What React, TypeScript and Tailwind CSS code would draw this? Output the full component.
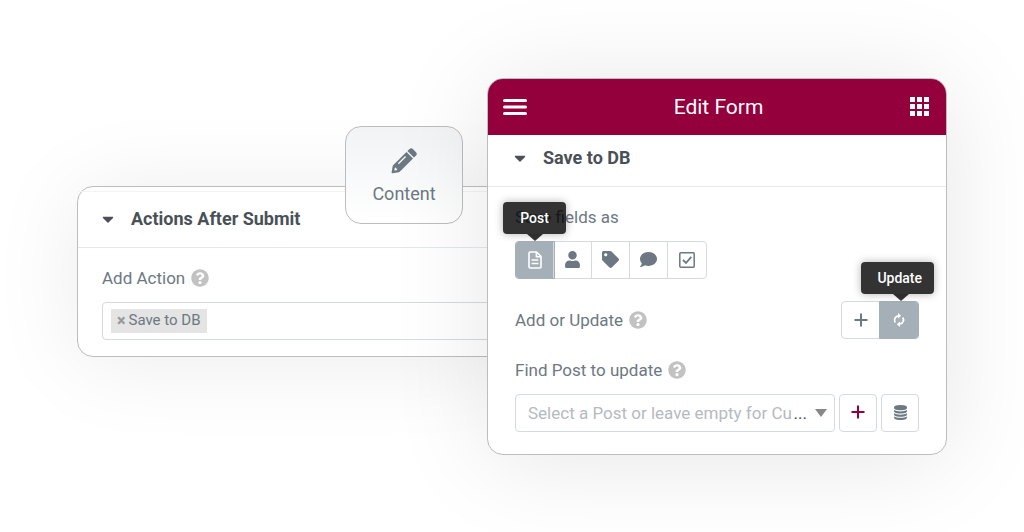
import { useState } from "react";
import type { ReactNode } from "react";
import { FaCaretDown, FaComment, FaQuestionCircle, FaTag, FaUser } from "react-icons/fa";

function PencilIcon() {
  return (
    <svg viewBox="0 0 26 26" className="size-[27px]" fill="currentColor" aria-hidden="true">
      <path d="M17.6 2.1a2.6 2.6 0 0 1 3.7 0l2.6 2.6a2.6 2.6 0 0 1 0 3.7l-1.8 1.8-6.3-6.3z" />
      <path
        fillRule="evenodd"
        d="M14.9 4.8l6.3 6.3L8.4 23.9a1.5 1.5 0 0 1-.8.4L1.4 25.2a.7.7 0 0 1-.8-.8l1-6.1a1.5 1.5 0 0 1 .4-.8zM13.6 8.7l-7 7 .9.9 7-7zM3.6 20.2l-.4 2.5 2.5-.3.3-1.5-1.1-.1-.1-1.1z"
      />
    </svg>
  );
}

function DocumentIcon() {
  return (
    <svg viewBox="0 0 14 18" className="h-[18px] w-[14px]" fill="none" stroke="currentColor" strokeWidth="1.6" aria-hidden="true">
      <path d="M2.2 1H8.6L13 5.4V15.8a1.2 1.2 0 0 1-1.2 1.2H2.2A1.2 1.2 0 0 1 1 15.8V2.2A1.2 1.2 0 0 1 2.2 1zM8.4 1.2V5.7H12.8" />
      <path d="M3.6 9H10.4M3.6 12.5H10.4" />
    </svg>
  );
}

function CheckBoxIcon() {
  return (
    <svg viewBox="0 0 16 16" className="size-4" fill="none" stroke="currentColor" aria-hidden="true">
      <rect x="0.8" y="0.8" width="14.4" height="14.4" rx="1" strokeWidth="1.5" />
      <path d="M4 8L7 11L12.3 4.8" strokeWidth="1.8" />
    </svg>
  );
}

function SyncIcon() {
  return (
    <svg viewBox="0 0 14 14" className="size-[14px]" fill="none" stroke="currentColor" strokeWidth="1.8" aria-hidden="true">
      <path d="M7.4 2.8H6.6A4.3 4.3 0 0 0 3.2 9.4M6.6 11.2H7.4A4.3 4.3 0 0 0 10.8 4.6" />
      <path d="M6 0V5.6L9.2 2.8zM8 14V8.4L4.8 11.2z" fill="currentColor" stroke="none" />
    </svg>
  );
}

function PlusIcon() {
  return (
    <svg viewBox="0 0 14 14" className="size-[14px]" stroke="currentColor" strokeWidth="2" aria-hidden="true">
      <path d="M7 0.5V13.5M0.5 7H13.5" />
    </svg>
  );
}

function DatabaseIcon() {
  return (
    <svg viewBox="0 0 1536 1792" className="h-[15px] w-[13px]" fill="currentColor" aria-hidden="true">
      <path d="M768 768q237 0 443-43t325-127v170q0 69-103 128t-280 93.5-385 34.5-385-34.5-280-93.5-103-128v-170q119 84 325 127t443 43zm0 768q237 0 443-43t325-127v170q0 69-103 128t-280 93.5-385 34.5-385-34.5-280-93.5-103-128v-170q119 84 325 127t443 43zm0-384q237 0 443-43t325-127v170q0 69-103 128t-280 93.5-385 34.5-385-34.5-280-93.5-103-128v-170q119 84 325 127t443 43zm0-1152q208 0 385 34.5t280 93.5 103 128v128q0 69-103 128t-280 93.5-385 34.5-385-34.5-280-93.5-103-128v-128q0-69 103-128t280-93.5 385-34.5z" />
    </svg>
  );
}

function Tooltip({ children, className }: { children: ReactNode; className: string }) {
  return (
    <span
      role="tooltip"
      className={`pointer-events-none absolute bottom-full mb-2 rounded bg-black/80 py-1.5 text-sm leading-5 font-medium text-white shadow-[0_0_8px_rgba(0,0,0,0.3)] ${className}`}
    >
      {children}
      <span className="absolute top-full left-[var(--tip)] h-0 w-0 -translate-x-1/2 border-x-8 border-t-[7px] border-x-transparent border-t-black/80" />
    </span>
  );
}

type Choice = { id: string; icon: ReactNode };

function Choices({
  label,
  items,
  initial,
  tip,
  tipClass,
}: {
  label: string;
  items: Choice[];
  initial: string;
  tip: string;
  tipClass: string;
}) {
  const [value, setValue] = useState(initial);
  return (
    <div role="group" aria-label={label} className="flex w-fit divide-x divide-[#d5dadf] rounded border border-[#d5dadf]">
      {items.map((item) => (
        <button
          key={item.id}
          type="button"
          aria-label={item.id}
          aria-pressed={value === item.id}
          onClick={() => setValue(item.id)}
          className="relative flex h-9 w-[38px] items-center justify-center text-[#6d7882] outline-[#a4afb7] first:rounded-l-[3px] last:rounded-r-[3px] aria-pressed:bg-[#a4afb7] aria-pressed:text-white aria-pressed:outline-1"
        >
          {item.icon}
          {value === item.id && item.id === initial && <Tooltip className={tipClass}>{tip}</Tooltip>}
        </button>
      ))}
    </div>
  );
}

function Label({ children, htmlFor, help }: { children: ReactNode; htmlFor?: string; help?: boolean }) {
  return (
    <div className="flex h-5 items-center gap-1.5 text-[17px] leading-5 text-[#6d7882]">
      <label htmlFor={htmlFor}>{children}</label>
      {help && <FaQuestionCircle className="size-[18px] text-[#c2c2c2]" />}
    </div>
  );
}

const fieldTypes: Choice[] = [
  { id: "Post", icon: <DocumentIcon /> },
  { id: "User", icon: <FaUser className="size-[17px]" /> },
  { id: "Term", icon: <FaTag className="size-[17px]" /> },
  { id: "Comment", icon: <FaComment className="size-[17px]" /> },
  { id: "Option", icon: <CheckBoxIcon /> },
];

const modes: Choice[] = [
  { id: "Add", icon: <PlusIcon /> },
  { id: "Update", icon: <SyncIcon /> },
];

export default function App() {
  return (
    <main className="flex min-h-screen items-center bg-white font-[Roboto,sans-serif]">
      <div className="mx-auto flex w-full max-w-[870px] items-center">
        <section className="relative mt-2.5 -mr-4 min-w-0 flex-1 rounded-2xl border border-[#bdbdbd] bg-white shadow-[0_5px_90px_rgba(0,0,0,0.08)]">
          <h2 className="mt-1 flex h-[57px] items-center border-y border-t-[#f1f3f4] border-b-[#e6e9ec] pl-[21px] text-lg font-bold text-[#495157]">
            <FaCaretDown className="mr-3.5 size-[18px]" />
            Actions After Submit
          </h2>
          <div className="flex flex-col gap-3.5 pt-5 pr-1 pb-4 pl-6">
            <Label htmlFor="action" help>
              Add Action
            </Label>
            <div className="flex h-[38px] items-center rounded border border-[#d5dadf] px-2">
              <button id="action" type="button" className="flex h-6 items-center gap-[3px] bg-[#e4e4e4] px-1.5 text-[15px] text-[#6d7882]">
                <span className="text-base font-black text-[#999]">×</span>
                Save to DB
              </button>
            </div>
          </div>
          <button
            type="button"
            className="absolute right-[39px] bottom-[132px] flex h-[98px] w-[118px] flex-col items-center justify-center gap-2 rounded-2xl border border-[#bdbdbd] bg-linear-to-b from-[#f1f3f5] to-white pt-1 text-lg leading-6 text-[#6d7882]"
          >
            <PencilIcon />
            Content
          </button>
        </section>

        <section className="relative w-[460px] shrink-0 rounded-2xl border border-[#bdbdbd] bg-white shadow-[0_5px_100px_rgba(0,0,0,0.1)]">
          <header className="flex h-14 items-center justify-between rounded-t-[15px] bg-[#93003c] pr-[17px] pl-[15px] text-white">
            <button type="button" aria-label="Menu">
              <svg viewBox="0 0 24 18" className="h-[18px] w-6" stroke="currentColor" strokeWidth="3" strokeLinecap="round">
                <path d="M1.5 2.5H22.5M1.5 9H22.5M1.5 15.5H22.5" />
              </svg>
            </button>
            <h1 className="text-[21px] leading-7">Edit Form</h1>
            <button type="button" aria-label="Widgets">
              <svg viewBox="0 0 19 19" className="size-[19px]" fill="currentColor">
                <path d="M0 0h5v5H0zM7 0h5v5H7zM14 0h5v5h-5zM0 7h5v5H0zM7 7h5v5H7zM14 7h5v5h-5zM0 14h5v5H0zM7 14h5v5H7zM14 14h5v5h-5z" />
              </svg>
            </button>
          </header>
          <h2 className="flex h-[52px] items-center border-b border-[#e6e9ec] pb-1 pl-[23px] text-lg font-bold text-[#495157]">
            <FaCaretDown className="mr-3.5 size-[18px]" />
            Save to DB
          </h2>
          <div className="flex flex-col px-[27px] pt-5 pb-[22px]">
            <Label>Save fields as</Label>
            <div className="mt-3.5 mb-[22px]">
              <Choices label="Save fields as" items={fieldTypes} initial="Post" tip="Post" tipClass="px-[17px] [--tip:50%]" />
            </div>
            <div className="flex items-center justify-between">
              <Label help>Add or Update</Label>
              <Choices
                label="Add or Update"
                items={modes}
                initial="Update"
                tip="Update"
                tipClass="-right-4 pr-3 pl-4 [--tip:54%]"
              />
            </div>
            <div className="mt-[21px] mb-3.5">
              <Label htmlFor="post" help>
                Find Post to update
              </Label>
            </div>
            <div className="flex gap-1">
              <div className="relative min-w-0 flex-1">
                <select
                  id="post"
                  className="h-[38px] w-full appearance-none rounded border border-[#d5dadf] bg-white pt-0.5 pl-3 text-[17px] text-[#b4babf]"
                >
                  <option>Select a Post or leave empty for Cu</option>
                </select>
                <span className="pointer-events-none absolute inset-y-0 right-2 flex items-center gap-2 text-[17px] text-[#495157]">
                  <span className="pt-0.5">...</span>
                  <svg viewBox="0 0 12 8" className="h-2 w-3 fill-[#888]">
                    <path d="M0 0H12L6 8z" />
                  </svg>
                </span>
              </div>
              <button
                type="button"
                aria-label="Add item"
                className="flex h-[38px] w-[38px] items-center justify-center rounded border border-[#d5dadf] pb-0.5 text-[#93003c]"
              >
                <PlusIcon />
              </button>
              <button
                type="button"
                aria-label="Dynamic tags"
                className="flex h-[38px] w-[38px] items-center justify-center rounded border border-[#d5dadf] text-[#6d7882]"
              >
                <DatabaseIcon />
              </button>
            </div>
          </div>
        </section>
      </div>
    </main>
  );
}
